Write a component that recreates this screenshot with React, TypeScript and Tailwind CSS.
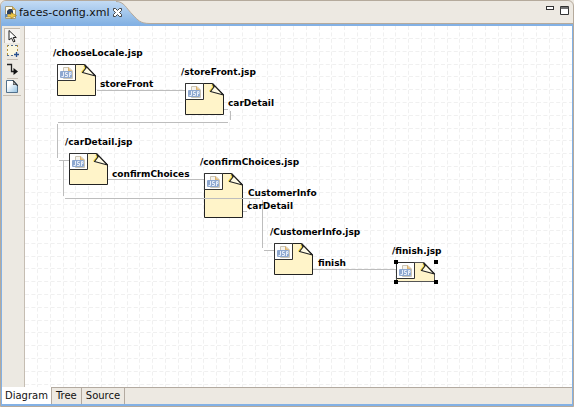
type PageNode = { id: string; label: string; x: number; y: number; height: number; selected?: boolean };

const nodes: PageNode[] = [
  { id: "choose", label: "/chooseLocale.jsp", x: 32, y: 38, height: 32 },
  { id: "store", label: "/storeFront.jsp", x: 160, y: 57, height: 32 },
  { id: "car", label: "/carDetail.jsp", x: 44, y: 127, height: 32 },
  { id: "confirm", label: "/confirmChoices.jsp", x: 179, y: 147, height: 45 },
  { id: "customer", label: "/CustomerInfo.jsp", x: 249, y: 217, height: 32 },
  { id: "finish", label: "/finish.jsp", x: 371, y: 236, height: 20, selected: true },
];

const outcomes = [
  { text: "storeFront", x: 75, y: 52 },
  { text: "carDetail", x: 203, y: 71 },
  { text: "confirmChoices", x: 87, y: 142 },
  { text: "CustomerInfo", x: 223, y: 161 },
  { text: "carDetail", x: 222, y: 174 },
  { text: "finish", x: 293, y: 231 },
];

const gridStops = [13, 26, 39, 51, 64];

function Grid() {
  return (
    <svg className="absolute inset-0 h-full w-full" aria-hidden="true">
      <defs>
        <pattern id="grid" width="64" height="64" patternUnits="userSpaceOnUse">
          {gridStops.map((n) => (
            <path
              key={n}
              d={`M${n - 0.5} 0V64M0 ${n - 0.5}H64`}
              stroke="#f0f0f0"
              strokeDasharray="4 2.4"
            />
          ))}
        </pattern>
      </defs>
      <rect width="100%" height="100%" fill="url(#grid)" />
    </svg>
  );
}

function Connections() {
  return (
    <svg className="absolute inset-0 h-full w-full" fill="none" stroke="#bdbdbd" aria-hidden="true">
      <path d="M72 64.5H160" />
      <path d="M199 83.5H203M205.5 85V94M203 96.5H33M32.5 98V132M34 134.5H44" />
      <path d="M38.5 135V170M40 172.5H235M237.5 174V222M239 224.5H249" />
      <path d="M83 153.5H179" />
      <path d="M218 185.5H222M224.5 175V184" />
      <path d="M288 243.5H371" />
    </svg>
  );
}

function JspBadge() {
  return (
    <g>
      <path d="M6.5 3.5H12L15.5 7V14.5H6.5Z" fill="#f6f4ee" stroke="#cbc5b4" />
      <path d="M11.5 3.5V7H15" fill="#edc98c" stroke="#d9b170" />
      <rect x="3" y="7" width="12" height="7" rx="1" fill="#8ea8d0" />
      <path
        d="M6.5 8V12.5H4.5M10.5 8.5H8.5V10.5H10.5V12.5H8M12.5 13V8.5H14V10.5H12.5"
        fill="none"
        stroke="#e6edf8"
      />
    </g>
  );
}

function NodeShape({ height, selected }: { height: number; selected?: boolean }) {
  const bottom = height - 0.5;
  return (
    <svg width="42" height={height + 2} viewBox={`0 0 42 ${height + 2}`} aria-hidden="true">
      <path
        d={`M.5 .5H27.5L38.5 11.5V${bottom}H.5Z`}
        fill="#fff4c9"
        stroke={selected ? "#555" : "#222"}
        strokeLinejoin="round"
      />
      <path d="M.5 .5H18.5V16.5H.5Z" fill="#fff" stroke="#333" />
      <JspBadge />
      <path d="M27.5 .5L28.5 4L25 9L38.5 12Z" fill="#fffbe5" />
      <path d="M27 1.5L28 4L24.5 8.5" fill="none" stroke="#f4d84b" strokeWidth="1.5" />
      <path
        d="M27.5 .5L29 4L25.5 8.5L38.5 12L27.5 .5"
        fill="none"
        stroke="#222"
        strokeWidth="1.2"
        strokeLinejoin="round"
      />
    </svg>
  );
}

function Handles() {
  return (
    <>
      <span className="absolute -top-0.5 -left-0.5 size-[4px] bg-black" />
      <span className="absolute -top-0.5 left-[38px] size-[4px] bg-black" />
      <span className="absolute top-[18px] -left-0.5 size-[4px] bg-black" />
      <span className="absolute top-[18px] left-[38px] size-[4px] bg-black" />
    </>
  );
}

function Diagram() {
  return (
    <main className="relative min-h-72 flex-1 overflow-hidden bg-white text-[9px] leading-[12px] font-bold text-black">
      <Grid />
      {nodes.map((n) => (
        <div key={n.id} className="absolute" style={{ left: n.x, top: n.y }}>
          <span className="absolute bottom-full -left-1 mb-[5px] whitespace-nowrap">{n.label}</span>
          <NodeShape height={n.height} selected={n.selected} />
          {n.selected && <Handles />}
        </div>
      ))}
      <Connections />
      {outcomes.map((o, i) => (
        <span key={i} className="absolute whitespace-nowrap" style={{ left: o.x, top: o.y }}>
          {o.text}
        </span>
      ))}
    </main>
  );
}

function FileIcon() {
  return (
    <svg width="13" height="13" viewBox="0 0 13 13" aria-hidden="true">
      <path d="M1.5 .5H8.5L11.5 3.5V12.5H1.5Z" fill="#fdf9e8" stroke="#a39a78" />
      <path d="M8.5 .5V3.5H11.5" fill="#e5bb54" stroke="#b89d58" />
      <path d="M3 8V5L5 3H8L9 5V8Z" fill="#2c3f5c" />
      <path d="M2 8.5H7V6.5L12.5 9.5L7 12.5V11H2Z" fill="#ecc546" stroke="#95771f" strokeWidth=".6" />
      <path d="M1 8H3.5V11H1Z" fill="#5f82ad" />
    </svg>
  );
}

function TabBar() {
  return (
    <header className="flex h-[23px] items-stretch justify-between">
      <div className="flex">
        <div className="flex items-center bg-linear-to-b from-[#c3dbf4] to-[#84b2e3] pl-[3px]">
          <FileIcon />
          <span className="ml-[2px] text-[11px] leading-4">faces-config.xml</span>
          <button aria-label="Close" className="z-10 ml-[3px]">
            <svg width="9" height="9" viewBox="0 0 9 9" aria-hidden="true">
              <path
                d="M.5 .5H2.5L4.5 2.5L6.5 .5H8.5V2.5L6.5 4.5L8.5 6.5V8.5H6.5L4.5 6.5L2.5 8.5H.5V6.5L2.5 4.5L.5 2.5Z"
                fill="#fff"
                stroke="#333"
                strokeWidth=".9"
              />
            </svg>
          </button>
        </div>
        <svg className="-ml-[6px]" width="34" height="23" viewBox="0 0 34 23" aria-hidden="true">
          <defs>
            <linearGradient id="tab" x1="0" y1="0" x2="0" y2="1">
              <stop stopColor="#c3dbf4" />
              <stop offset="1" stopColor="#84b2e3" />
            </linearGradient>
          </defs>
          <path d="M0 0H34V23H0Z" fill="url(#tab)" />
          <path d="M0 .5C8 .5 10 7 17 14C22 19 24 22.5 34 22.5V0H0Z" fill="#ede9e2" />
          <path d="M0 .5C8 .5 10 7 17 14C22 19 24 22.5 34 22.5" fill="none" stroke="#b5aa9c" />
        </svg>
      </div>
      <div className="flex flex-1 items-start justify-end gap-[6px] border-b border-[#b5aa9c] pt-[5px] pr-[4px]">
        <button aria-label="Minimize">
          <svg width="8" height="4" viewBox="0 0 8 4" aria-hidden="true">
            <rect x=".5" y=".5" width="7" height="3" fill="#fff" stroke="#333" />
          </svg>
        </button>
        <button aria-label="Maximize">
          <svg width="9" height="9" viewBox="0 0 9 9" aria-hidden="true">
            <path d="M.5 .5H8.5V8.5H.5Z" fill="#fff" stroke="#333" />
            <path d="M0 2H9" stroke="#444" strokeWidth="1.4" />
          </svg>
        </button>
      </div>
    </header>
  );
}

function Palette() {
  return (
    <nav className="flex w-[23px] shrink-0 flex-col items-center border-r border-[#c5bdb2] bg-[#ece9e2] pr-[2px]">
      <button
        aria-label="Select"
        className="mt-[2px] flex h-[15px] w-4 items-center justify-center border-t border-l border-[#c0b8ad] bg-[#f5f3f0]"
      >
        <svg width="9" height="13" viewBox="0 0 9 13" aria-hidden="true">
          <path d="M1 .5V10L3.5 8L5.5 12L7 11.3L5.2 7.5H8.3Z" fill="#fff" stroke="#222" />
        </svg>
      </button>
      <button aria-label="Marquee" className="mt-px">
        <svg width="13" height="13" viewBox="0 0 13 13" aria-hidden="true">
          <rect x="1" y="1" width="10" height="10" fill="#fbf7df" />
          <path d="M1 1.5H11M1 11.5H8" fill="none" stroke="#4d6c94" strokeDasharray="2 2" />
          <path d="M1.5 1V12M11.5 1V7" fill="none" stroke="#b3923f" strokeDasharray="2 2" />
          <path d="M10.5 8V13M8 10.5H13" stroke="#264f8f" strokeWidth="1.3" />
        </svg>
      </button>
      <hr className="mt-[2px] w-[11px] border-[#c5bdb2]" />
      <button aria-label="Connection" className="mt-[3px]">
        <svg width="13" height="13" viewBox="0 0 13 13" aria-hidden="true">
          <path d="M1 1.5H5.5V8.5H9" fill="none" stroke="#222" strokeWidth="1.3" />
          <path d="M7.5 5L12 8.5L7.5 12Z" fill="#111" />
        </svg>
      </button>
      <hr className="mt-[2px] w-[11px] border-[#c5bdb2]" />
      <button aria-label="Page" className="mt-px">
        <svg width="12" height="13" viewBox="0 0 12 13" aria-hidden="true">
          <defs>
            <linearGradient id="page" x1="0" y1="0" x2="1" y2="1">
              <stop offset=".3" stopColor="#fff" />
              <stop offset="1" stopColor="#8fc0e2" />
            </linearGradient>
          </defs>
          <path d="M.5 .5H7.5L11.5 5V12.5H.5Z" fill="url(#page)" stroke="#52718c" />
          <path d="M7 .5C8 2 8 3 7.5 4.5C9 4 10 4.5 11.5 5.5Z" fill="#fff" stroke="#222" />
        </svg>
      </button>
      <hr className="mt-[2px] w-[18px] border-[#c5bdb2]" />
    </nav>
  );
}

function ViewTabs() {
  return (
    <footer className="flex h-[17px] border-t border-[#b3aaa0] bg-[#ede9e2] text-[10px] leading-4">
      <button className="-mt-px border-r border-[#b3aaa0] bg-white px-[3px]">Diagram</button>
      <button className="border-r border-[#b3aaa0] px-[4px]">Tree</button>
      <button className="border-r border-[#b3aaa0] px-[4px]">Source</button>
    </footer>
  );
}

export default function App() {
  return (
    <div className="min-h-screen bg-[#ede9e2] font-['DejaVu_Sans',sans-serif] text-[#111]">
      <div className="flex min-h-screen flex-col overflow-hidden rounded-t-md border border-[#b5aa9c] bg-[#ede9e2]">
        <TabBar />
        <div className="flex flex-1 flex-col border-x border-t-2 border-b-2 border-[#83b1e5]">
          <div className="flex flex-1">
            <Palette />
            <Diagram />
          </div>
          <ViewTabs />
        </div>
      </div>
    </div>
  );
}
